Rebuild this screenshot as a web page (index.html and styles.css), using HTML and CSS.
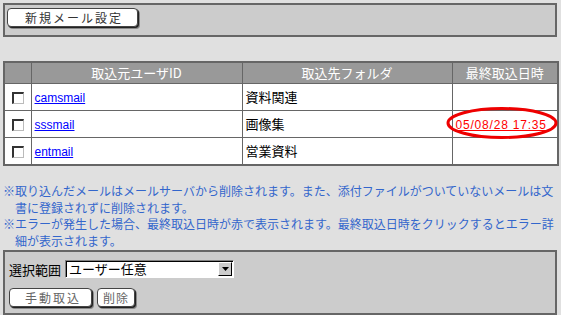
FILE: index.html
```html
<!DOCTYPE html>
<html lang="ja">
<head>
<meta charset="utf-8">
<link rel="stylesheet" href="styles.css">
</head>
<body>
<div class="page">
  <div class="panel top-panel">
    <div class="btn btn-new" role="button"><span class="btn-label">新規メール設定</span></div>
  </div>

  <table class="grid">
    <colgroup>
      <col class="c-check"><col class="c-user"><col class="c-folder"><col class="c-date">
    </colgroup>
    <thead>
      <tr><th></th><th>取込元ユーザID</th><th>取込先フォルダ</th><th>最終取込日時</th></tr>
    </thead>
    <tbody>
      <tr><td class="chk"><span class="box"></span></td><td><a href="#">camsmail</a></td><td>資料関連</td><td></td></tr>
      <tr><td class="chk"><span class="box"></span></td><td><a href="#">sssmail</a></td><td>画像集</td><td class="date-cell"><a href="#" class="err">05/08/28 17:35</a><svg class="ring" width="116" height="36" viewBox="0 0 116 36"><ellipse cx="57" cy="17" rx="54" ry="14.5" fill="none" stroke="#ee0000" stroke-width="3"/></svg></td></tr>
      <tr><td class="chk"><span class="box"></span></td><td><a href="#">entmail</a></td><td>営業資料</td><td></td></tr>
    </tbody>
  </table>

  <div class="notes">
    <p>※取り込んだメールはメールサーバから削除されます。また、添付ファイルがついていないメールは文書に登録されずに削除されます。</p>
    <p>※エラーが発生した場合、最終取込日時が赤で表示されます。最終取込日時をクリックするとエラー詳細が表示されます。</p>
  </div>

  <div class="panel bottom-panel">
    <div class="sel-row">
      <span class="label">選択範囲</span>
      <div class="select"><span class="sel-text">ユーザー任意</span><span class="sel-btn"><svg width="7" height="4" viewBox="0 0 7 4"><path d="M0 0h7L3.5 4z" fill="#000"/></svg></span></div>
    </div>
    <div class="btn-row">
      <div class="btn btn-dim btn-import" role="button"><span class="btn-label">手動取込</span></div>
      <div class="btn btn-dim btn-del" role="button"><span class="btn-label">削除</span></div>
    </div>
  </div>
</div>
</body>
</html>
```

FILE: styles.css
```css
html, body {
  margin: 0;
  padding: 0;
  background: #e0e0e0;
  font-family: "Noto Sans CJK JP", "Liberation Sans", sans-serif;
  font-size: 13px;
  color: #000;
}
.page {
  padding: 3px 4px 0 3px;
}
.panel {
  background: #cccccc;
  border: 2px solid #666666;
  box-sizing: border-box;
}
.top-panel {
  height: 34px;
  padding: 3px 2px;
}
.btn {
  display: flex;
  align-items: center;
  box-sizing: border-box;
  background: #ffffff;
  border: 1px solid #444;
  border-radius: 4px;
  box-shadow: 1px 1px 0 #222, 2px 2px 0 #888;
  height: 19px;
  color: #333;
  cursor: default;
}
.btn-label {
  font-size: 12px;
  line-height: 17px;
  letter-spacing: 2px;
}
.btn-new {
  width: 131px;
  padding-left: 17px;
}
.grid {
  margin-top: 24px;
  width: 554px;
  border-collapse: collapse;
  border: 2px solid #666;
  background: #fff;
  table-layout: fixed;
}
.c-check { width: 27px; }
.c-user { width: 211px; }
.c-folder { width: 210px; }
.c-date { width: 106px; }
.grid th, .grid td {
  border: 1px solid #666;
  padding: 0 0 0 3px;
  line-height: 16px;
}
.grid th {
  background: #999999;
  color: #fff;
  font-weight: normal;
  height: 20px;
  text-align: center;
  padding: 0;
  font-size: 13px;
}
.grid td {
  height: 26px;
  font-size: 13px;
}
.grid td.chk {
  padding: 0;
  text-align: center;
}
.box {
  display: inline-block;
  width: 9px;
  height: 9px;
  background: #fff;
  border-top: 2px solid #333;
  border-left: 2px solid #333;
  border-right: 1px solid #bbb;
  border-bottom: 1px solid #bbb;
  vertical-align: middle;
}
.grid a {
  font-family: "Liberation Sans", sans-serif;
  font-size: 12px;
  color: #0000ff;
  text-decoration: underline;
}
.date-cell {
  position: relative;
}
.grid a.err {
  color: #ff0000;
  letter-spacing: 0.8px;
}
.ring {
  position: absolute;
  left: -8px;
  top: -5px;
}
.notes {
  margin-top: 17px;
  color: #3366cc;
  font-size: 12px;
  line-height: 16.5px;
}
.notes p {
  margin: 0;
  padding-left: 12px;
  text-indent: -12px;
}
.bottom-panel {
  margin-top: 1px;
  height: 65px;
  padding: 8px 2px 0 2px;
}
.sel-row {
  display: flex;
  align-items: center;
  gap: 4px;
  height: 18px;
}
.label {
  font-size: 13px;
  padding-left: 2px;
}
.select {
  display: flex;
  width: 169px;
  height: 18px;
  box-sizing: border-box;
  background: #fff;
  border-top: 1px solid #808080;
  border-left: 1px solid #808080;
  border-right: 1px solid #fff;
  border-bottom: 1px solid #fff;
  box-shadow: inset 1px 1px 0 #000;
}
.sel-text {
  flex: 1;
  font-size: 13px;
  line-height: 16px;
  padding-left: 3px;
}
.sel-btn {
  width: 14px;
  margin: 1px 1px 1px 0;
  background: #ccc;
  border-top: 1px solid #fff;
  border-left: 1px solid #fff;
  border-right: 1px solid #000;
  border-bottom: 1px solid #000;
  box-sizing: border-box;
  display: flex;
  align-items: center;
  justify-content: center;
}
.btn-row {
  display: flex;
  gap: 5px;
  margin-top: 10px;
  padding-left: 2px;
}
.btn-dim {
  color: #666;
}
.btn-import { width: 83px; padding-left: 15px; }
.btn-del { width: 38px; padding-left: 5px; }
.btn-del .btn-label { letter-spacing: 1px; }
```
